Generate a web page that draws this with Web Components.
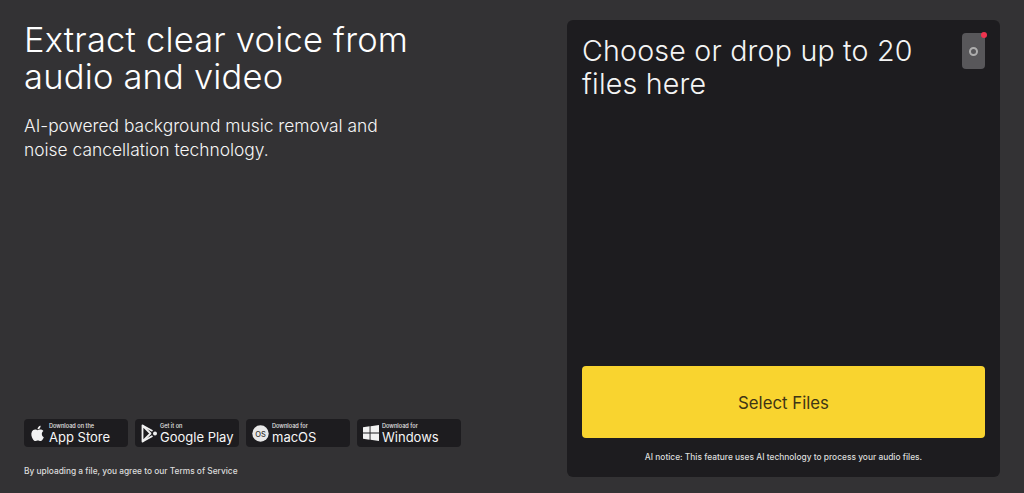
<!DOCTYPE html>
<html>
<head>
<meta charset="utf-8">
<title>Extract voice</title>
<style>
  html, body { margin: 0; height: 100%; background: #333234; overflow: hidden; }
  body { font-family: Inter, "Noto Sans", sans-serif; color: #fff; }
</style>
</head>
<body>
<voice-page>
  <hero-text slot="left"></hero-text>
  <div slot="left" style="display:flex;gap:7px">
    <store-badge small="Download on the" big="App Store" icon="apple"></store-badge>
    <store-badge small="Get it on" big="Google Play" icon="play"></store-badge>
    <store-badge small="Download for" big="macOS" icon="mac" style="gap:3px"></store-badge>
    <store-badge small="Download for" big="Windows" icon="win"></store-badge>
  </div>
  <upload-card slot="right"></upload-card>
</voice-page>

<script>
class VoicePage extends HTMLElement {
  constructor() {
    super();
    this.attachShadow({ mode: 'open' });
    this.shadowRoot.innerHTML = `
      <style>
        :host { display: flex; height: 493px; box-sizing: border-box; padding: 20px 24px 16px 24px; justify-content: space-between; }
        .left { width: 440px; display: flex; flex-direction: column; }
        .terms { font-size: 8.35px; line-height: 12px; font-weight: 500; color: #dcdcdc; margin: 18px 0 0; }
        .right { width: 433px; }
      </style>
      <div class="left">
        <slot name="left"></slot>
        <p class="terms">By uploading a file, you agree to our Terms of Service</p>
      </div>
      <div class="right"><slot name="right"></slot></div>
    `;
  }
}

class HeroText extends HTMLElement {
  constructor() {
    super();
    this.attachShadow({ mode: 'open' });
    this.shadowRoot.innerHTML = `
      <style>
        :host { display: block; flex: 1; padding-top: 1px; }
        h1 { margin: 0; font-size: 34.5px; font-weight: 300; line-height: 37px; letter-spacing: 0.2px; color: #fff; }
        p { margin: 19px 0 0; font-size: 17.4px; font-weight: 350; line-height: 24px; color: #f6f6f6; }
      </style>
      <h1>Extract clear voice from<br>audio and video</h1>
      <p>AI-powered background music removal and<br>noise cancellation technology.</p>
    `;
  }
}

const ICONS = {
  apple: '<svg width="18" height="21" viewBox="0 0 24 24" fill="#f2f2f2"><path d="M17.05 12.54c-.03-2.6 2.12-3.85 2.22-3.91-1.21-1.77-3.09-2.01-3.76-2.04-1.6-.16-3.12.94-3.93.94-.81 0-2.06-.92-3.39-.89-1.74.03-3.35 1.01-4.25 2.57-1.81 3.14-.46 7.8 1.3 10.35.86 1.25 1.89 2.65 3.24 2.6 1.3-.05 1.79-.84 3.36-.84 1.57 0 2.01.84 3.39.81 1.4-.02 2.28-1.27 3.14-2.53.99-1.45 1.4-2.85 1.42-2.92-.03-.01-2.72-1.04-2.74-4.14zM14.47 4.9c.72-.87 1.2-2.08 1.07-3.28-1.03.04-2.28.69-3.02 1.55-.66.77-1.24 2-1.09 3.18 1.15.09 2.32-.58 3.04-1.45z"/></svg>',
  play: '<svg width="17" height="19" viewBox="0 0 17 19" fill="none" stroke="#f2f2f2" stroke-width="1.8" stroke-linejoin="round"><path d="M1.5 1.5v16L9.5 9.5z"/><path d="M1.5 1.5 11.5 7M1.5 17.5 11.5 12"/><circle cx="14" cy="9.5" r="2" fill="#f2f2f2" stroke="none"/></svg>',
  mac: '<svg width="17" height="17" viewBox="0 0 17 17"><circle cx="8.5" cy="8.5" r="8.2" fill="#e8e8e8"/><text x="8.5" y="12" text-anchor="middle" font-family="Inter, sans-serif" font-size="7.5" font-weight="500" fill="#333">OS</text></svg>',
  win: '<svg width="16" height="16" viewBox="0 0 16 16" fill="#f2f2f2"><path d="M0 2.3 6.6 1.3V7.6H0zM7.5 1.2 16 0V7.6H7.5zM0 8.5H6.6V14.8L0 13.8zM7.5 8.5H16V16L7.5 14.8z"/></svg>'
};

class StoreBadge extends HTMLElement {
  constructor() {
    super();
    this.attachShadow({ mode: 'open' });
  }

  connectedCallback() {
    this.shadowRoot.innerHTML = `
      <style>
        :host { display: flex; align-items: center; gap: 2px; width: 104px; height: 28px; box-sizing: border-box; padding-left: 5px; background: #1d1c1f; border-radius: 4px; }
        .ico { width: 18px; display: flex; justify-content: center; }
        .txt { display: flex; flex-direction: column; }
        .s { font-size: 5.6px; line-height: 7px; font-weight: 500; color: #e6e6e6; }
        .b { font-size: 13px; line-height: 14px; font-weight: 400; color: #f6f6f6; }
      </style>
      <span class="ico">${ICONS[this.getAttribute('icon')]}</span>
      <span class="txt"><span class="s">${this.getAttribute('small')}</span><span class="b">${this.getAttribute('big')}</span></span>
    `;
  }
}

class UploadCard extends HTMLElement {
  constructor() {
    super();
    this.attachShadow({ mode: 'open' });
    this.shadowRoot.innerHTML = `
      <style>
        :host { display: flex; flex-direction: column; height: 457px; box-sizing: border-box; padding: 14px 15px 0; background: #1d1c1f; border-radius: 6px; }
        .top { flex: 1; display: flex; justify-content: space-between; align-items: flex-start; }
        h2 { margin: 0; font-size: 28.6px; line-height: 33px; font-weight: 300; letter-spacing: 0.2px; color: #f4f4f4; }
        .rec { position: relative; width: 23px; height: 36px; margin-top: -1px; background: #58575a; border-radius: 4px; display: flex; align-items: center; justify-content: center; }
        .rec i { width: 5px; height: 5px; border: 2px solid #aeaeae; border-radius: 50%; }
        .rec b { position: absolute; top: -1px; right: -2px; width: 6px; height: 6px; border-radius: 50%; background: #f0344f; }
        button { height: 72px; border: 0; border-radius: 4px; background: #f9d42f; color: #3e3515; font: 400 16.8px Inter, sans-serif; padding: 1px 0 0; }
        p { margin: 0; height: 37px; padding-bottom: 2px; display: flex; align-items: center; justify-content: center; font-size: 8.4px; font-weight: 500; color: #dcdcdc; }
      </style>
      <div class="top">
        <h2>Choose or drop up to 20<br>files here</h2>
        <div class="rec"><i></i><b></b></div>
      </div>
      <button>Select Files</button>
      <p>AI notice: This feature uses AI technology to process your audio files.</p>
    `;
  }
}

customElements.define('voice-page', VoicePage);
customElements.define('hero-text', HeroText);
customElements.define('store-badge', StoreBadge);
customElements.define('upload-card', UploadCard);
</script>
</body>
</html>
